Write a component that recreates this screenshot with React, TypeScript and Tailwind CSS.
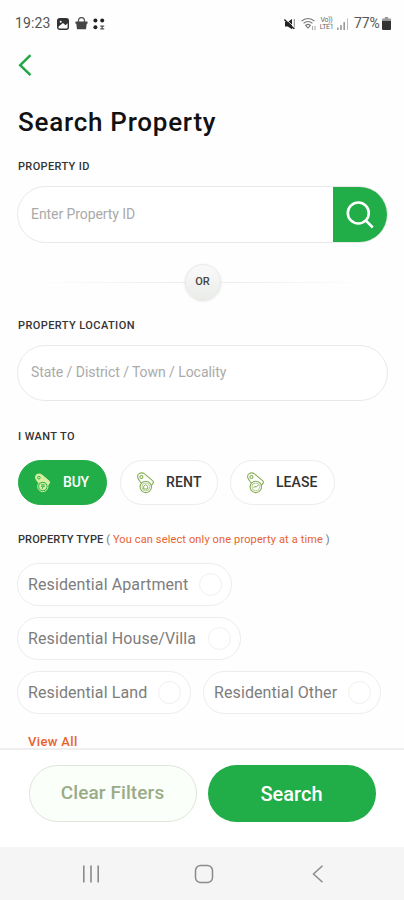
import { ReactNode } from "react";
import clsx from "clsx";

interface TagIconProps {
  active?: boolean;
  mark: string;
}

interface SectionLabelProps {
  children: ReactNode;
  className?: string;
}

const offers = [
  { label: "BUY", width: "w-[89px]", text: "tracking-[-0.2px]", mark: "M7.800 13h4M7.800 14.800h4M9 17.500l2-4", active: true },
  { label: "RENT", width: "w-[98px] ml-px", text: "tracking-[0.2px]", mark: "M7.700 17v-2.700l2-1.600 2 1.600v2.700z", active: false },
  { label: "LEASE", width: "w-[105px]", text: "tracking-[0.05px]", mark: "M7.600 16l1.400-1.800 1.200 1 2-2.200", active: false },
];

const propertyTypes = [
  { label: "Residential Apartment", width: "w-[215px]" },
  { label: "Residential House/Villa", width: "w-[224px]" },
  { label: "Residential Land", width: "w-[174px]" },
  { label: "Residential Other", width: "w-[178px]" },
];

function TagIcon({ active = false, mark }: TagIconProps) {
  return (
    <svg
      width="20"
      height="22"
      viewBox="0 0 20 22"
      fill="none"
      stroke={active ? "#d9efa0" : "#86ae55"}
      strokeWidth="1.1"
      strokeLinejoin="round"
      className={clsx("shrink-0", active && "scale-[0.9]")}
    >
      <path
        d="M4.200 9.800 2 6.400C1.300 4.600 1.600 2.600 3.200 1.600c1.500-.9 4-.6 5.400.3l8.200 7c.8.7.8 1.300.4 2l-1.800 2.600"
        fill={active ? "#d9efa0" : "none"}
      />
      <path d="M4.200 9.800l1.400 1.600" />
      <circle cx="5.400" cy="5" r="1.500" stroke={active ? "#21ad47" : "#86ae55"} />
      <circle cx="9.800" cy="14.900" r="5.700" fill={active ? "#21ad47" : "#fff"} />
      <circle cx="9.800" cy="14.900" r="3.900" strokeWidth="0.600" fill={active ? "#d9efa0" : "none"} />
      <path d={mark} strokeWidth="1" stroke={active ? "#21ad47" : "#86ae55"} />
    </svg>
  );
}

function StatusBar() {
  return (
    <div className="flex h-[47px] items-center pl-[15px] pr-[13px] text-[#555]">
      <span className="w-[42px] text-[14px] tracking-[0.1px]">19:23</span>
      <svg width="12" height="12" viewBox="0 0 12 12" className="mt-px">
        <rect x="0.7" y="0.7" width="10.6" height="10.6" rx="2" fill="#fff" stroke="#333" strokeWidth="1.4" />
        <path d="M1 1h10v4L8.500 7.300 6 5 1 9z" fill="#333" />
        <circle cx="3.7" cy="3.8" r="1" fill="#fff" />
      </svg>
      <svg width="13" height="13" viewBox="0 0 13 13" className="ml-[6px]">
        <path d="M3.500 5V3.500a3 3 0 0 1 6 0V5" fill="none" stroke="#555" strokeWidth="1.3" />
        <path d="M.5 4.500h12v2.200h-.8L11 12.300H2l-.7-5.600H.5z" fill="#444" />
      </svg>
      <svg width="12" height="12" viewBox="0 0 12 12" fill="#222" className="ml-[5px]">
        <circle cx="2.4" cy="2.4" r="2" />
        <circle cx="9.2" cy="2.4" r="2" />
        <circle cx="2.4" cy="9.2" r="2" />
        <path d="M7.200 7.400h4v1.300h-1.300v1.600h1.300v1.200h-4v-1.200h1.300V8.700H7.200z" fill="#555" />
      </svg>
      <div className="ml-auto flex items-center">
        <svg width="12" height="12" viewBox="0 0 12 12">
          <path d="M1 4h2.800L8 1v10.200L3.800 8.500H1z" fill="#222" />
          <path d="M10.300 1v10" stroke="#888" strokeWidth="1" />
          <path d="M.4 1.600l9.600 9.200" stroke="#222" strokeWidth="1.5" />
          <path d="M1.500 .8l9.500 9" stroke="#fff" strokeWidth="0.8" />
        </svg>
        <svg width="16" height="14" viewBox="0 0 16 14" fill="none" stroke="#777" strokeWidth="1.1" className="ml-[5px]">
          <path d="M.6 4.200a9 9 0 0 1 12.800 0M2.600 6.400a6.200 6.200 0 0 1 8.800 0M4.700 8.500a3.300 3.300 0 0 1 4.600 0L7 11z" />
          <path d="M11.500 9v4M14 9v4" stroke="#aaa" />
        </svg>
        <div className="ml-[2px] flex h-[14px] w-[15px] flex-col items-center text-[7px] leading-[7px] tracking-[-0.3px] text-[#666]">
          <span>Vo))</span>
          <span>LTE1</span>
        </div>
        <svg width="12" height="12" viewBox="0 0 12 12" className="ml-[3px]" fill="#999">
          <path d="M0 9.500h1.600V12H0zM3.200 7h1.600v5H3.200zM6.400 4H8v8H6.400z" />
          <path d="M10 .5h1V12h-1z" fill="#bbb" />
        </svg>
        <span className="ml-[5px] w-[27px] whitespace-nowrap text-[14px] tracking-[-0.100px]">77%</span>
        <svg width="9" height="13" viewBox="0 0 9 13" className="ml-px">
          <path d="M2.800 0h3.400v1.500H8a1 1 0 0 1 1 1V4H0V2.500a1 1 0 0 1 1-1h1.800z" fill="#999" />
          <path d="M0 4h9v8a1 1 0 0 1-1 1H1a1 1 0 0 1-1-1z" fill="#333" />
        </svg>
      </div>
    </div>
  );
}

function SectionLabel({ children, className }: SectionLabelProps) {
  return (
    <div className={clsx("ml-px h-4 whitespace-nowrap text-[11px] leading-4 text-[#333]", className)}>
      {children}
    </div>
  );
}

function NavigationBar() {
  return (
    <div className="flex h-[53px] items-center bg-[#f5f5f5] pl-[82px] text-[#8b8b8b]">
      <svg width="18" height="18" viewBox="0 0 18 18" stroke="currentColor" strokeWidth="1.6">
        <path d="M1.800 0.500v17M9 .5v17M16.200 .5v17" />
      </svg>
      <svg width="20" height="20" viewBox="0 0 20 20" fill="none" stroke="currentColor" strokeWidth="1.5" className="ml-[94px]">
        <rect x="1.500" y="1.500" width="17" height="17" rx="5" />
      </svg>
      <svg width="12" height="18" viewBox="0 0 12 18" fill="none" stroke="currentColor" strokeWidth="1.5" className="ml-[98px]">
        <path d="M10.500 .8 1.500 9l9 8.200" />
      </svg>
    </div>
  );
}

export default function App() {
  return (
    <div className="flex h-[900px] w-[404px] flex-col overflow-hidden bg-[#fefefe] font-['Roboto',sans-serif]">
      <StatusBar />
      <main className="h-[701px] shrink-0 overflow-hidden pl-[17px] pr-4">
        <button className="mt-[7px] block h-[23px]">
          <svg width="15" height="23" viewBox="0 0 15 23" fill="none" stroke="#21a747" strokeWidth="2.5">
            <path d="M13.500 1.200 3.200 11.200l10.300 10" />
          </svg>
        </button>
        <h1 className="ml-px mt-[29px] whitespace-nowrap text-[26px] font-medium leading-8 tracking-[0.75px] text-[#111]">
          Search Property
        </h1>

        <SectionLabel className="mt-[21px] font-medium tracking-[0.35px]">PROPERTY ID</SectionLabel>
        <div className="mt-[11px] flex h-[57px] w-[371px] overflow-hidden rounded-full border border-[#e9e9e9] bg-white">
          <div className="flex-1 pl-[13px] text-[14px] leading-[55px] tracking-[-0.07px] text-[#aaa]">
            Enter Property ID
          </div>
          <button className="flex w-[54px] items-center justify-center bg-[#21ad47]">
            <svg width="28" height="28" viewBox="0 0 28 28" fill="none" stroke="#fff" strokeWidth="2.600">
              <circle cx="12.300" cy="12" r="10.500" />
              <path d="M19.800 19.500l7 7" />
            </svg>
          </button>
        </div>

        <div className="mt-[21px] flex h-9 items-center justify-center">
          <span className="h-px w-[150px] bg-linear-to-r from-transparent to-[#ececec]" />
          <span className="flex size-9 items-center justify-center rounded-full border border-[#e8e9e6] bg-linear-to-b from-[#fafafa] to-[#ebede9] text-[11px] font-medium text-[#444] shadow-sm">
            OR
          </span>
          <span className="h-px w-[150px] bg-linear-to-l from-transparent to-[#ececec]" />
        </div>

        <SectionLabel className="mt-[18px] font-medium tracking-[0.42px]">PROPERTY LOCATION</SectionLabel>
        <div className="mt-[11px] h-[56px] w-[371px] rounded-full border border-[#e9e9e9] bg-white pl-[13px] text-[14px] leading-[53px] tracking-[-0.06px] text-[#aaa]">
          State / District / Town / Locality
        </div>

        <SectionLabel className="mt-[28px] font-medium tracking-[0.42px]">I WANT TO</SectionLabel>
        <div className="mt-[15px] flex h-[45px] gap-3">
          {offers.map(({ label, width, text, mark, active }, index) => (
            <button
              key={label}
              className={clsx(
                "flex h-[45px] items-center gap-[10px] rounded-full border text-[14px] font-medium",
                width,
                text,
                index === 0 && "ml-px",
                active
                  ? "border-[#21ad47] bg-[#21ad47] pl-[14px] text-white"
                  : "border-[#ececec] bg-white pl-[15px] text-[#333]"
              )}
            >
              <TagIcon active={active} mark={mark} />
              {label}
            </button>
          ))}
        </div>

        <SectionLabel className="mt-[27px] tracking-[0.1px]">
          <span className="font-medium">PROPERTY TYPE</span>
          <span className="text-[#777]"> ( </span>
          <span className="tracking-[0.14px] text-[#e8622f]">You can select only one property at a time</span>
          <span className="text-[#777]"> )</span>
        </SectionLabel>
        <div className="mt-[15px] flex flex-wrap gap-x-3 gap-y-[11px]">
          {propertyTypes.map(({ label, width }) => (
            <button
              key={label}
              className={clsx(
                "flex h-[43px] items-center justify-between whitespace-nowrap rounded-full border border-[#ececec] bg-white pl-[10px] pr-[9px] text-[16px] tracking-[0.1px] text-[#7d7d7d]",
                width
              )}
            >
              {label}
              <span className="size-[23px] rounded-full border border-[#efefef]" />
            </button>
          ))}
        </div>
        <a className="ml-[11px] mt-[18px] block text-[13px] font-medium leading-5 tracking-[0.350px] text-[#e8622f]">View All</a>
      </main>

      <footer className="flex h-[99px] shrink-0 justify-center gap-[11px] border-t-2 border-[#eeeeec] bg-white pt-[15px] font-medium">
        <button className="h-[57px] w-[168px] rounded-full border border-[#dfe6d9] bg-[#fafffa] text-[19px] tracking-[0.1px] text-[#9aab88]">
          Clear Filters
        </button>
        <button className="h-[57px] w-[168px] rounded-full bg-[#21ad47] text-[20px] text-white">Search</button>
      </footer>
      <NavigationBar />
    </div>
  );
}
